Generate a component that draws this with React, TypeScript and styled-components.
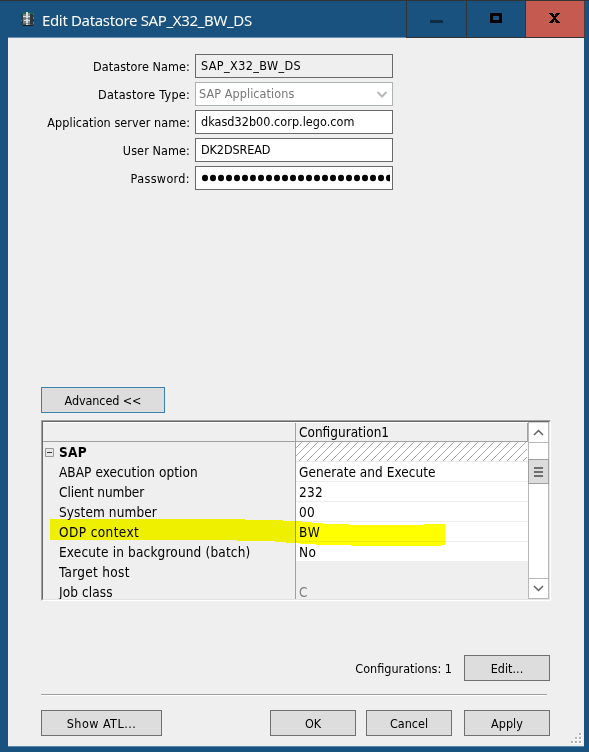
import React from "react";
import styled, { createGlobalStyle } from "styled-components";

const Global = createGlobalStyle`
  * { box-sizing: border-box; }
  body { margin: 0; background: #19527f; overflow: hidden; }
`;

const uiFont = `"DejaVu Sans Condensed", "DejaVu Sans", sans-serif`;

const Window = styled.div`
  width: 589px;
  height: 752px;
  background: #19527f;
  border-top: 1px solid #333;
  display: flex;
  flex-direction: column;
  font-family: ${uiFont};
  font-size: 12.5px;
  color: #000;
`;

const TitleBar = styled.header`
  display: flex;
  height: 37px;
  padding-left: 8px;
  flex: none;
`;

const TitleArea = styled.div`
  width: 398px;
  display: flex;
  align-items: center;
  padding-left: 12px;
  border-bottom: 1px solid #6b8fae;
`;

const Title = styled.h1`
  margin: 1px 0 0 6px;
  font: 400 15px/22px "Noto Sans", "Open Sans", sans-serif;
  letter-spacing: -0.35px;
  color: #fff;
  white-space: nowrap;
`;

const CaptionButton = styled.div<{ $w: number; $bg?: string }>`
  width: ${(p) => p.$w}px;
  height: 37px;
  border-left: 1px solid #333;
  border-bottom: 1px solid #333;
  background: ${(p) => p.$bg ?? "#19527f"};
  &:last-child { border-right: 1px solid #4a3b42; }
  svg { display: block; }
`;

const Client = styled.main`
  width: 576px;
  height: 709px;
  margin-left: 8px;
  padding: 16px 0 0 33px;
  background: #efefef;
  border-bottom: 1px solid #5b86a8;
  display: flex;
  flex-direction: column;
  position: relative;
`;

const Form = styled.div`
  display: grid;
  grid-template-columns: 149px 198px;
  column-gap: 5px;
  row-gap: 4px;
  height: 333px;
  align-content: start;
`;

const Label = styled.label<{ $ls?: number }>`
  line-height: 24px;
  padding-top: 1px;
  height: 24px;
  text-align: right;
  white-space: nowrap;
  letter-spacing: ${(p) => p.$ls ?? 0}px;
`;

const Field = styled.div<{ $kind?: "readonly" | "disabled"; $ls?: number }>`
  height: 24px;
  line-height: 22px;
  padding-left: ${(p) => (p.$kind === "disabled" ? 3 : 5)}px;
  border: 1px solid ${(p) => (p.$kind === "disabled" ? "#adb2b5" : "#696969")};
  background: ${(p) => (p.$kind === "readonly" ? "#efefef" : "#fff")};
  color: ${(p) => (p.$kind === "disabled" ? "#777" : "#000")};
  letter-spacing: ${(p) => p.$ls ?? 0}px;
  display: flex;
  align-items: center;
  justify-content: space-between;
  white-space: nowrap;
  overflow: hidden;
`;

const Button = styled.button<{ $w: number; $focus?: boolean; $ls?: number }>`
  width: ${(p) => p.$w}px;
  height: 26px;
  flex: none;
  padding: 1px 0 0;
  font: 12.5px/22px ${uiFont};
  letter-spacing: ${(p) => p.$ls ?? 0}px;
  color: #000;
  background: #ddd;
  border: 1px solid ${(p) => (p.$focus ? "#3c7fb1" : "#707070")};
  border-radius: 0;
`;

const Sheet = styled.section`
  width: 510px;
  height: 181px;
  flex: none;
  margin-top: 7px;
  border: 1px solid;
  border-color: #a0a0a0 #fff #fff #a0a0a0;
  position: relative;
`;

const SheetInner = styled.div`
  height: 179px;
  border: 1px solid;
  border-color: #696969 #e3e3e3 #e3e3e3 #696969;
  display: flex;
  overflow: hidden;
`;

const Grid = styled.div`
  width: 485px;
  flex: none;
  font-size: 13.5px;
`;

const Row = styled.div`
  display: grid;
  grid-template-columns: 252px 233px;
  height: 20px;
  line-height: 20px;
`;

const NameCell = styled.div<{ $ls?: number; $bold?: boolean }>`
  position: relative;
  height: 20px;
  padding-left: 16px;
  letter-spacing: ${(p) => p.$ls ?? 0}px;
  font-weight: ${(p) => (p.$bold ? 700 : 400)};
  white-space: nowrap;
`;

const ValueCell = styled.div<{ $ls?: number; $editable?: boolean; $muted?: boolean }>`
  height: 20px;
  border-left: 1px solid #a0a0a0;
  padding-left: 3px;
  letter-spacing: ${(p) => p.$ls ?? 0}px;
  background: ${(p) => (p.$editable ? "#fff" : "#efefef")};
  box-shadow: ${(p) => (p.$editable ? "inset 0 -1px #ececec" : "none")};
  color: ${(p) => (p.$muted ? "#808080" : "#000")};
  white-space: nowrap;
`;

const HeadName = styled(NameCell)`
  height: 18px;
`;

const HeadValue = styled(ValueCell)`
  height: 18px;
  border-right: 1px solid #a0a0a0;
`;

const HeadRow = styled(Row)`
  line-height: 18px;
  border-top: 1px solid #fff;
  border-bottom: 1px solid #a0a0a0;
`;

const HatchCell = styled(ValueCell)`
  padding: 0;
  svg { display: block; }
`;

const Collapse = styled.svg`
  position: absolute;
  left: 2px;
  top: 6px;
`;

const ScrollBar = styled.div`
  width: 21px;
  height: 177px;
  background: #fff;
  border-left: 1px solid #b8b8b8;
  border-right: 1px solid #b8b8b8;
  display: flex;
  flex-direction: column;
`;

const ScrollEnd = styled.div<{ $bottom?: boolean }>`
  height: 21px;
  border-top: 1px solid ${(p) => (p.$bottom ? "#b8b8b8" : "#d0d0d0")};
  border-bottom: 1px solid #b8b8b8;
  svg { display: block; }
`;

const Thumb = styled.div`
  height: 25px;
  margin: 16px -1px auto;
  border: 1px solid #a0a0a0;
  background: #dcdcdc;
  display: flex;
  flex-direction: column;
  align-items: center;
  justify-content: center;
  gap: 2px;
`;

const Grip = styled.i`
  width: 9px;
  height: 2px;
  background: #6e6e6e;
`;

const Marker = styled.svg`
  position: absolute;
  left: 8px;
  top: 98px;
  mix-blend-mode: multiply;
`;

const ConfigLine = styled.div`
  display: flex;
  width: 509px;
  margin-top: 54px;
  justify-content: flex-end;
  align-items: center;
  gap: 12px;
`;

const Note = styled.span`
  padding-top: 1px;
`;

const Rule = styled.hr`
  width: 506px;
  margin: 13px 0 14px;
  border: 0;
  border-top: 1px solid #a0a0a0;
  border-bottom: 1px solid #fff;
`;

const Actions = styled.footer`
  display: flex;
  width: 509px;
  gap: 10px;
  & > :first-child { margin-right: 98px; }
  & > :last-child { margin-left: auto; }
`;

const SizeGrip = styled.svg`
  position: absolute;
  right: 2px;
  bottom: 2px;
`;

function AppIcon() {
  return (
    <svg width="16" height="16" viewBox="0 0 16 16">
      <path d="M1 2h2v12H1zM13 2h1v12h-1z" fill="#303c40" />
      <path d="M2 1h12v3H2z" fill="#17625f" />
      <path d="M3 3h10v11l-2 1H5l-2-1z" fill="#4b5254" />
      <path d="M3 3h3v10H3z" fill="#7c8284" />
      <path d="M6 1h2v14H6z" fill="#d9dddd" />
      <path d="M8 2h2v12H8z" fill="#82898b" />
      <path d="M3 5h7v1H3zM4 9h6v1H4z" fill="#d8dada" />
      <path d="M3 7h9v1H3zM3 12h9v1H3z" fill="#4e5c60" opacity=".5" />
      <path d="M10 3h3v10h-3z" fill="#202c30" opacity=".7" />
      <path d="M13 3h1v1h-1zM13 6h1v2h-1zM13 11h1v2h-1zM1 9h1v1H1z" fill="#2aa091" />
      <path d="M3 14h10v1H3z" fill="#15191b" />
    </svg>
  );
}

const hatch = Array.from({ length: 33 }, (_, i) => i * 8 - 21);

const rows = [
  { name: "ABAP execution option", value: "Generate and Execute", editable: true, ls: 0.06, vls: 0.03 },
  { name: "Client number", value: "232", editable: true, ls: -0.1, vls: 0.3 },
  { name: "System number", value: "00", editable: true, ls: 0.1, vls: 0.3 },
  { name: "ODP context", value: "BW", editable: true, ls: 0.4, vls: 0.8 },
  { name: "Execute in background (batch)", value: "No", editable: true, ls: 0.16, vls: 0.3 },
  { name: "Target host", value: "", editable: false, ls: 0.3, vls: 0 },
  { name: "Job class", value: "C", editable: false, ls: 0.1, vls: 0 },
];

export default function App() {
  return (
    <>
      <Global />
      <Window>
        <TitleBar>
          <TitleArea>
            <AppIcon />
            <Title>Edit Datastore SAP_X32_BW_DS</Title>
          </TitleArea>
          <CaptionButton $w={60}>
            <svg width="59" height="36"><path d="M23 19h13v3H23z" fill="#102c42" /></svg>
          </CaptionButton>
          <CaptionButton $w={59}>
            <svg width="58" height="36"><path d="M23 12h12v10H23zM26 15v4h6v-4z" fill="#000" fillRule="evenodd" /></svg>
          </CaptionButton>
          <CaptionButton $w={60} $bg="#c45a50">
            <svg width="58" height="36" shapeRendering="crispEdges">
              <path d="M23 12h4v1h1v2h1v-2h1v-1h4v1h-1v1h-1v1h-1v1h-1v2h1v1h1v1h1v1h1v1h-4v-1h-1v-2h-1v2h-1v1h-4v-1h1v-1h1v-1h1v-1h1v-2h-1v-1h-1v-1h-1v-1h-1z" fill="#000" />
            </svg>
          </CaptionButton>
        </TitleBar>

        <Client>
          <Form>
            <Label $ls={0.08}>Datastore Name:</Label>
            <Field $kind="readonly" $ls={0.4}>SAP_X32_BW_DS</Field>
            <Label $ls={0.25}>Datastore Type:</Label>
            <Field $kind="disabled" $ls={0.08}>
              SAP Applications
              <svg width="20" height="22"><path d="M5.5 9l4.5 4.5L14.500 9" fill="none" stroke="#b8b8b8" strokeWidth="2" /></svg>
            </Field>
            <Label $ls={0.06}>Application server name:</Label>
            <Field $ls={0.04}>dkasd32b00.corp.lego.com</Field>
            <Label $ls={0.1}>User Name:</Label>
            <Field $ls={-0.1}>DK2DSREAD</Field>
            <Label $ls={0.35}>Password:</Label>
            <Field>
              <svg width="189" height="22">
                {Array.from({ length: 24 }, (_, i) => (
                  <ellipse key={i} cx={4 + i * 8} cy="11" rx="3" ry="3.300" />
                ))}
              </svg>
            </Field>
          </Form>

          <Button $w={124} $focus $ls={-0.1}>Advanced &lt;&lt;</Button>

          <Sheet>
            <SheetInner>
              <Grid>
                <HeadRow>
                  <HeadName />
                  <HeadValue>Configuration1</HeadValue>
                </HeadRow>
                <Row>
                  <NameCell $bold $ls={0.3}>
                    <Collapse width="9" height="9">
                      <path d="M.5.5h8v8h-8z" fill="#e8e8e8" stroke="#989898" />
                      <path d="M2 4.500h5" stroke="#333" />
                    </Collapse>
                    SAP
                  </NameCell>
                  <HatchCell $editable>
                    <svg width="231" height="19" shapeRendering="crispEdges">
                      {hatch.map((x) => (
                        <path key={x} d={`M${x} 19L${x + 19} 0`} stroke="#808080" strokeWidth="0.7" />
                      ))}
                    </svg>
                  </HatchCell>
                </Row>
                {rows.map((r) => (
                  <Row key={r.name}>
                    <NameCell $ls={r.ls}>{r.name}</NameCell>
                    <ValueCell $ls={r.vls} $editable={r.editable} $muted={!r.editable}>{r.value}</ValueCell>
                  </Row>
                ))}
              </Grid>
              <ScrollBar>
                <ScrollEnd>
                  <svg width="19" height="19"><path d="M5 12l4.500-4.500L14 12" fill="none" stroke="#606060" strokeWidth="1.500" /></svg>
                </ScrollEnd>
                <Thumb><Grip /><Grip /><Grip /></Thumb>
                <ScrollEnd $bottom>
                  <svg width="19" height="19"><path d="M5 7l4.500 4.500L14 7" fill="none" stroke="#606060" strokeWidth="1.500" /></svg>
                </ScrollEnd>
              </ScrollBar>
            </SheetInner>
            <Marker width="396" height="30">
              <path d="M0 0H195V1H233V2H252V3H262V4H273V5H299V6H374V5H395V26H391V27H301V26H266V25H250V24H236V23H225V22H187V21H0Z" fill="#ff0" />
            </Marker>
          </Sheet>

          <ConfigLine>
            <Note>Configurations: 1</Note>
            <Button $w={86}>Edit...</Button>
          </ConfigLine>
          <Rule />
          <Actions>
            <Button $w={121} $ls={0.45}>Show ATL...</Button>
            <Button $w={86}>OK</Button>
            <Button $w={86}>Cancel</Button>
            <Button $w={86}>Apply</Button>
          </Actions>
          <SizeGrip width="12" height="12" shapeRendering="crispEdges">
            {[[9, 0], [5, 4], [9, 4], [1, 8], [5, 8], [9, 8]].map(([x, y]) => (
              <g key={`${x}-${y}`}>
                <rect x={x} y={y + 1} width="3" height="3" fill="#fff" />
                <rect x={x} y={y + 1} width="2" height="2" fill="#b0b0b0" />
              </g>
            ))}
          </SizeGrip>
        </Client>
      </Window>
    </>
  );
}
